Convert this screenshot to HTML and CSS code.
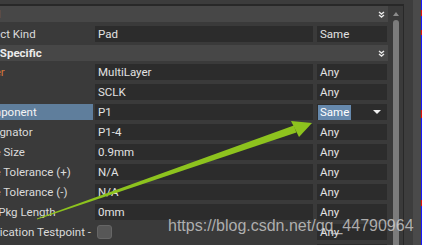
FILE: index.html
```html
<!DOCTYPE html>
<html lang="en">
<head>
    <meta charset="UTF-8">
    <title>Find Similar Objects</title>
    <link rel="stylesheet" href="styles.css">
</head>
<body>
    <div class="window">
        <div class="panel">
            <div class="list">
                <div class="section first">
                    <span>Kind</span>
                    <svg class="chev" width="7" height="7" viewBox="0 0 7 7"><path d="M1 1 L3.5 3 L6 1 M1 4 L3.5 6 L6 4" fill="none" stroke="#e8e8e8" stroke-width="1.4"/></svg>
                </div>
                <div class="row">
                    <div class="label">Object Kind</div>
                    <div class="value">Pad</div>
                    <div class="match">Same</div>
                </div>
                <div class="section">
                    <span>Pad Specific</span>
                    <svg class="chev" width="7" height="7" viewBox="0 0 7 7"><path d="M1 1 L3.5 3 L6 1 M1 4 L3.5 6 L6 4" fill="none" stroke="#e8e8e8" stroke-width="1.4"/></svg>
                </div>
                <div class="row">
                    <div class="label layer">Layer</div>
                    <div class="value">MultiLayer</div>
                    <div class="match">Any</div>
                </div>
                <div class="row">
                    <div class="label">Net</div>
                    <div class="value">SCLK</div>
                    <div class="match">Any</div>
                </div>
                <div class="row">
                    <div class="label selected">Component</div>
                    <div class="value">P1</div>
                    <div class="match combo"><span class="picked">Same</span><span class="drop"></span></div>
                </div>
                <div class="row">
                    <div class="label">Designator</div>
                    <div class="value">P1-4</div>
                    <div class="match">Any</div>
                </div>
                <div class="row">
                    <div class="label">Hole Size</div>
                    <div class="value">0.9mm</div>
                    <div class="match">Any</div>
                </div>
                <div class="row">
                    <div class="label">Hole Tolerance (+)</div>
                    <div class="value">N/A</div>
                    <div class="match">Any</div>
                </div>
                <div class="row">
                    <div class="label">Hole Tolerance (-)</div>
                    <div class="value">N/A</div>
                    <div class="match">Any</div>
                </div>
                <div class="row">
                    <div class="label">Pin/Pkg Length</div>
                    <div class="value">0mm</div>
                    <div class="match">Any</div>
                </div>
                <div class="row">
                    <div class="label">Fabrication Testpoint - Top</div>
                    <div class="value plain"><span class="check"></span></div>
                    <div class="match">Any</div>
                </div>
                <div class="row">
                    <div class="label">Fabrication Testpoint - Bottom</div>
                    <div class="value plain"><span class="check"></span></div>
                    <div class="match">Any</div>
                </div>
            </div>
            <div class="scroll">
                <div class="up"></div>
                <div class="thumb"></div>
            </div>
        </div>
        <div class="gutter"></div>
        <div class="strip"></div>
        <div class="edge"></div>
    </div>

    <!-- annotation -->
    <svg class="arrow" width="422" height="245" viewBox="0 0 422 245">
        <polygon points="37,218.6 293.8,125.5 296.4,132.5 37,219.4" fill="#8dc31e"/>
        <polygon points="291,121 312,123 299,137" fill="#8dc31e"/>
    </svg>
    <div class="watermark">https://blog.csdn.net/qq_44790964</div>
</body>
</html>
```

FILE: styles.css
```css
* {
    margin: 0;
    padding: 0;
    box-sizing: border-box;
}

body {
    width: 422px;
    height: 245px;
    overflow: hidden;
    position: relative;
    background: #3c3c3c;
    color: #dadada;
    font-family: Roboto, "Noto Sans", sans-serif;
    font-size: 11.5px;
}

.window {
    display: flex;
    height: 245px;
}

.panel {
    display: flex;
    width: 434px;
    margin: 4px 0 0 -30px;
    background: #3a3a3a;
    border-top: 2px solid #282828;
    border-right: 1px solid #282828;
}

.list {
    width: 419px;
}

.section {
    width: 418px;
    height: 16px;
    margin: 1px 0;
    padding: 0 3px 0 7px;
    display: flex;
    align-items: center;
    justify-content: space-between;
    background: #474747;
    color: #ececec;
    font-weight: bold;
    white-space: nowrap;
}

.section.first {
    margin: 0 0 2px;
}

.row {
    display: flex;
    align-items: center;
    height: 20px;
}

.label {
    width: 123px;
    height: 16px;
    line-height: 16px;
    padding-left: 7px;
    white-space: nowrap;
    overflow: hidden;
}

.label.layer {
    color: #d6783a;
}

.label.selected {
    background: #5f7e9c;
    color: #f4f4f4;
}

.value {
    width: 218px;
    height: 16px;
    line-height: 16px;
    margin-left: 2px;
    padding-left: 3px;
    background: #2c2c2c;
    color: #e2e2e2;
}

.value.plain {
    background: none;
    padding-left: 2px;
    display: flex;
    align-items: center;
}

.check {
    width: 15px;
    height: 14px;
    border-radius: 3px;
    background: #575757;
    border: 1px solid #666;
}

.match {
    width: 70px;
    height: 16px;
    line-height: 16px;
    margin-left: 4px;
    padding-left: 3px;
    background: #2c2c2c;
    color: #e2e2e2;
}

.combo {
    display: flex;
    align-items: center;
    justify-content: space-between;
    padding: 0 6px 0 1px;
}

.picked {
    background: #6689ad;
    color: #fff;
    padding: 0 2px;
    height: 15px;
    line-height: 15px;
}

.drop {
    width: 0;
    height: 0;
    border-left: 4px solid transparent;
    border-right: 4px solid transparent;
    border-top: 4px solid #f0f0f0;
}

.scroll {
    width: 14px;
    padding: 6px 0 0 4px;
    display: flex;
    flex-direction: column;
}

.up {
    width: 0;
    height: 0;
    border-left: 3px solid transparent;
    border-right: 3px solid transparent;
    border-bottom: 4px solid #8c8c8c;
}

.thumb {
    width: 6px;
    flex: 1;
    margin-top: 4px;
    border-radius: 3px 3px 0 0;
    background: #7c7c7c;
}

.gutter {
    width: 9px;
    background: #3d3d3d;
}

.strip {
    width: 8px;
    background: #4a4a4a;
}

.edge {
    width: 1px;
    background: linear-gradient(#1a1aff 0, #1a1aff 10px, #e01010 10px, #e01010 16px, #1a1aff 16px, #1a1aff 30px, #e01010 30px, #e01010 35px, #1a1aff 35px, #1a1aff 110px, #e01010 110px, #e01010 118px, #1a1aff 118px, #1a1aff 200px, #e01010 200px, #e01010 206px, #1a1aff 206px);
}

/* annotation over the dialog */
.arrow {
    position: absolute;
    top: 0;
    left: 0;
}

.watermark {
    position: absolute;
    left: 168px;
    top: 218px;
    font-family: "Liberation Sans", Arial, sans-serif;
    font-size: 16px;
    line-height: 16px;
    color: rgba(215, 215, 215, 0.75);
    white-space: nowrap;
}
```
